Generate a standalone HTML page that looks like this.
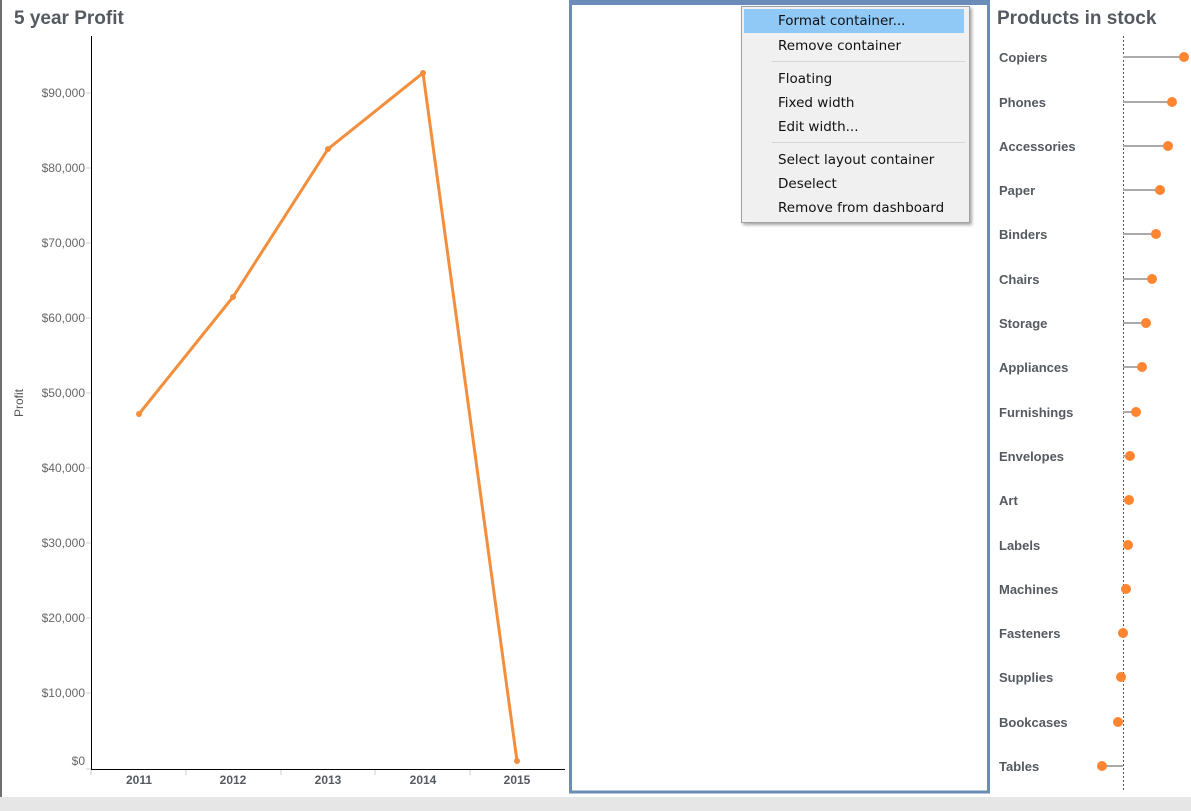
<!DOCTYPE html>
<html><head><meta charset="utf-8"><style>
body{margin:0;width:1191px;height:811px;overflow:hidden;background:#fff;font-family:"Liberation Sans",Arial,sans-serif;position:relative}
.t{position:absolute;font-weight:bold;color:#555a60;font-size:19px}
.menu{position:absolute;left:741px;top:6px;width:227px;height:215px;background:#f0f0f0;border:1px solid #a0a0a0;box-shadow:2px 2px 3px rgba(0,0,0,.35);font-family:"DejaVu Sans","Liberation Sans",sans-serif;font-size:13.5px;color:#111}
.mi{position:absolute;left:36px}
.sep{position:absolute;left:30px;right:4px;height:1px;background:#d5d5d5}
</style></head><body>
<div style="position:absolute;left:0;top:0;width:2px;height:797px;background:#707070"></div>
<div style="position:absolute;left:0;top:797px;width:1191px;height:14px;background:#e6e6e6"></div>
<div class="t" style="left:14px;top:8px">5 year Profit</div>
<div class="t" style="left:997px;top:8px">Products in stock</div>
<svg width="1191" height="811" style="position:absolute;left:0;top:0" font-family="Liberation Sans,Arial,sans-serif">
<g fill="#666" font-size="12" text-anchor="end">
<text x="85" y="97">$90,000</text><text x="85" y="172">$80,000</text><text x="85" y="247">$70,000</text><text x="85" y="322">$60,000</text><text x="85" y="397">$50,000</text><text x="85" y="472">$40,000</text><text x="85" y="547">$30,000</text><text x="85" y="622">$20,000</text><text x="85" y="697">$10,000</text><text x="85" y="765">$0</text>
</g>
<g stroke="#ccc"><line x1="86" y1="93" x2="91" y2="93"/><line x1="86" y1="168" x2="91" y2="168"/><line x1="86" y1="243" x2="91" y2="243"/><line x1="86" y1="318" x2="91" y2="318"/><line x1="86" y1="393" x2="91" y2="393"/><line x1="86" y1="468" x2="91" y2="468"/><line x1="86" y1="543" x2="91" y2="543"/><line x1="86" y1="618" x2="91" y2="618"/><line x1="86" y1="693" x2="91" y2="693"/><line x1="86" y1="769" x2="91" y2="769"/>
<line x1="91" y1="770" x2="91" y2="775"/><line x1="186" y1="770" x2="186" y2="775"/><line x1="281" y1="770" x2="281" y2="775"/><line x1="375" y1="770" x2="375" y2="775"/><line x1="470" y1="770" x2="470" y2="775"/></g>
<text x="23" y="403" fill="#555" font-size="12" transform="rotate(-90 23 403)" text-anchor="middle">Profit</text>
<line x1="91.5" y1="36" x2="91.5" y2="770" stroke="#000"/>
<line x1="91" y1="769.5" x2="565" y2="769.5" stroke="#000"/>
<g fill="#555a60" font-size="12" font-weight="bold" text-anchor="middle"><text x="139" y="784">2011</text><text x="233" y="784">2012</text><text x="328" y="784">2013</text><text x="423" y="784">2014</text><text x="517" y="784">2015</text></g>
<polyline points="139,414 233,297 328,149 423,73 517,761" fill="none" stroke="#f28e3c" stroke-width="3"/>
<g fill="#f28e3c"><circle cx="139" cy="414" r="3"/><circle cx="233" cy="297" r="3"/><circle cx="328" cy="149" r="3"/><circle cx="423" cy="73" r="3"/><circle cx="517" cy="761" r="3"/></g>
<rect x="570.5" y="3" width="418" height="789" fill="none" stroke="#6b8bb8" stroke-width="3"/>
<rect x="569" y="0" width="421" height="5" fill="#6b8bb8"/>
<line x1="1123.5" y1="36" x2="1123.5" y2="790" stroke="#555" stroke-dasharray="2,2"/>
<g fill="#555a60" font-size="13" font-weight="bold">
<text x="999" y="62">Copiers</text><text x="999" y="107">Phones</text><text x="999" y="151">Accessories</text><text x="999" y="195">Paper</text><text x="999" y="239">Binders</text><text x="999" y="284">Chairs</text><text x="999" y="328">Storage</text><text x="999" y="372">Appliances</text><text x="999" y="417">Furnishings</text><text x="999" y="461">Envelopes</text><text x="999" y="505">Art</text><text x="999" y="550">Labels</text><text x="999" y="594">Machines</text><text x="999" y="638">Fasteners</text><text x="999" y="682">Supplies</text><text x="999" y="727">Bookcases</text><text x="999" y="771">Tables</text>
</g>
<g stroke="#aaa" stroke-width="2">
<line x1="1123" y1="57" x2="1184" y2="57"/><line x1="1123" y1="102" x2="1172" y2="102"/><line x1="1123" y1="146" x2="1168" y2="146"/><line x1="1123" y1="190" x2="1160" y2="190"/><line x1="1123" y1="234" x2="1156" y2="234"/><line x1="1123" y1="279" x2="1152" y2="279"/><line x1="1123" y1="323" x2="1146" y2="323"/><line x1="1123" y1="367" x2="1142" y2="367"/><line x1="1123" y1="412" x2="1136" y2="412"/><line x1="1123" y1="456" x2="1130" y2="456"/><line x1="1123" y1="500" x2="1129" y2="500"/><line x1="1123" y1="545" x2="1128" y2="545"/><line x1="1102" y1="766" x2="1123" y2="766"/>
</g>
<g fill="#ff8531">
<circle cx="1184" cy="57" r="5"/><circle cx="1172" cy="102" r="5"/><circle cx="1168" cy="146" r="5"/><circle cx="1160" cy="190" r="5"/><circle cx="1156" cy="234" r="5"/><circle cx="1152" cy="279" r="5"/><circle cx="1146" cy="323" r="5"/><circle cx="1142" cy="367" r="5"/><circle cx="1136" cy="412" r="5"/><circle cx="1130" cy="456" r="5"/><circle cx="1129" cy="500" r="5"/><circle cx="1128" cy="545" r="5"/><circle cx="1126" cy="589" r="5"/><circle cx="1123" cy="633" r="5"/><circle cx="1121" cy="677" r="5"/><circle cx="1118" cy="722" r="5"/><circle cx="1102" cy="766" r="5"/>
</g>
</svg>
<div class="menu">
<div style="position:absolute;left:2px;top:2px;width:220px;height:24px;background:#90c8f6"></div>
<div class="mi" style="top:6px">Format container...</div>
<div class="mi" style="top:31px">Remove container</div>
<div class="sep" style="top:54px"></div>
<div class="mi" style="top:64px">Floating</div>
<div class="mi" style="top:88px">Fixed width</div>
<div class="mi" style="top:112px">Edit width...</div>
<div class="sep" style="top:135px"></div>
<div class="mi" style="top:145px">Select layout container</div>
<div class="mi" style="top:169px">Deselect</div>
<div class="mi" style="top:193px">Remove from dashboard</div>
</div>
</body></html>
